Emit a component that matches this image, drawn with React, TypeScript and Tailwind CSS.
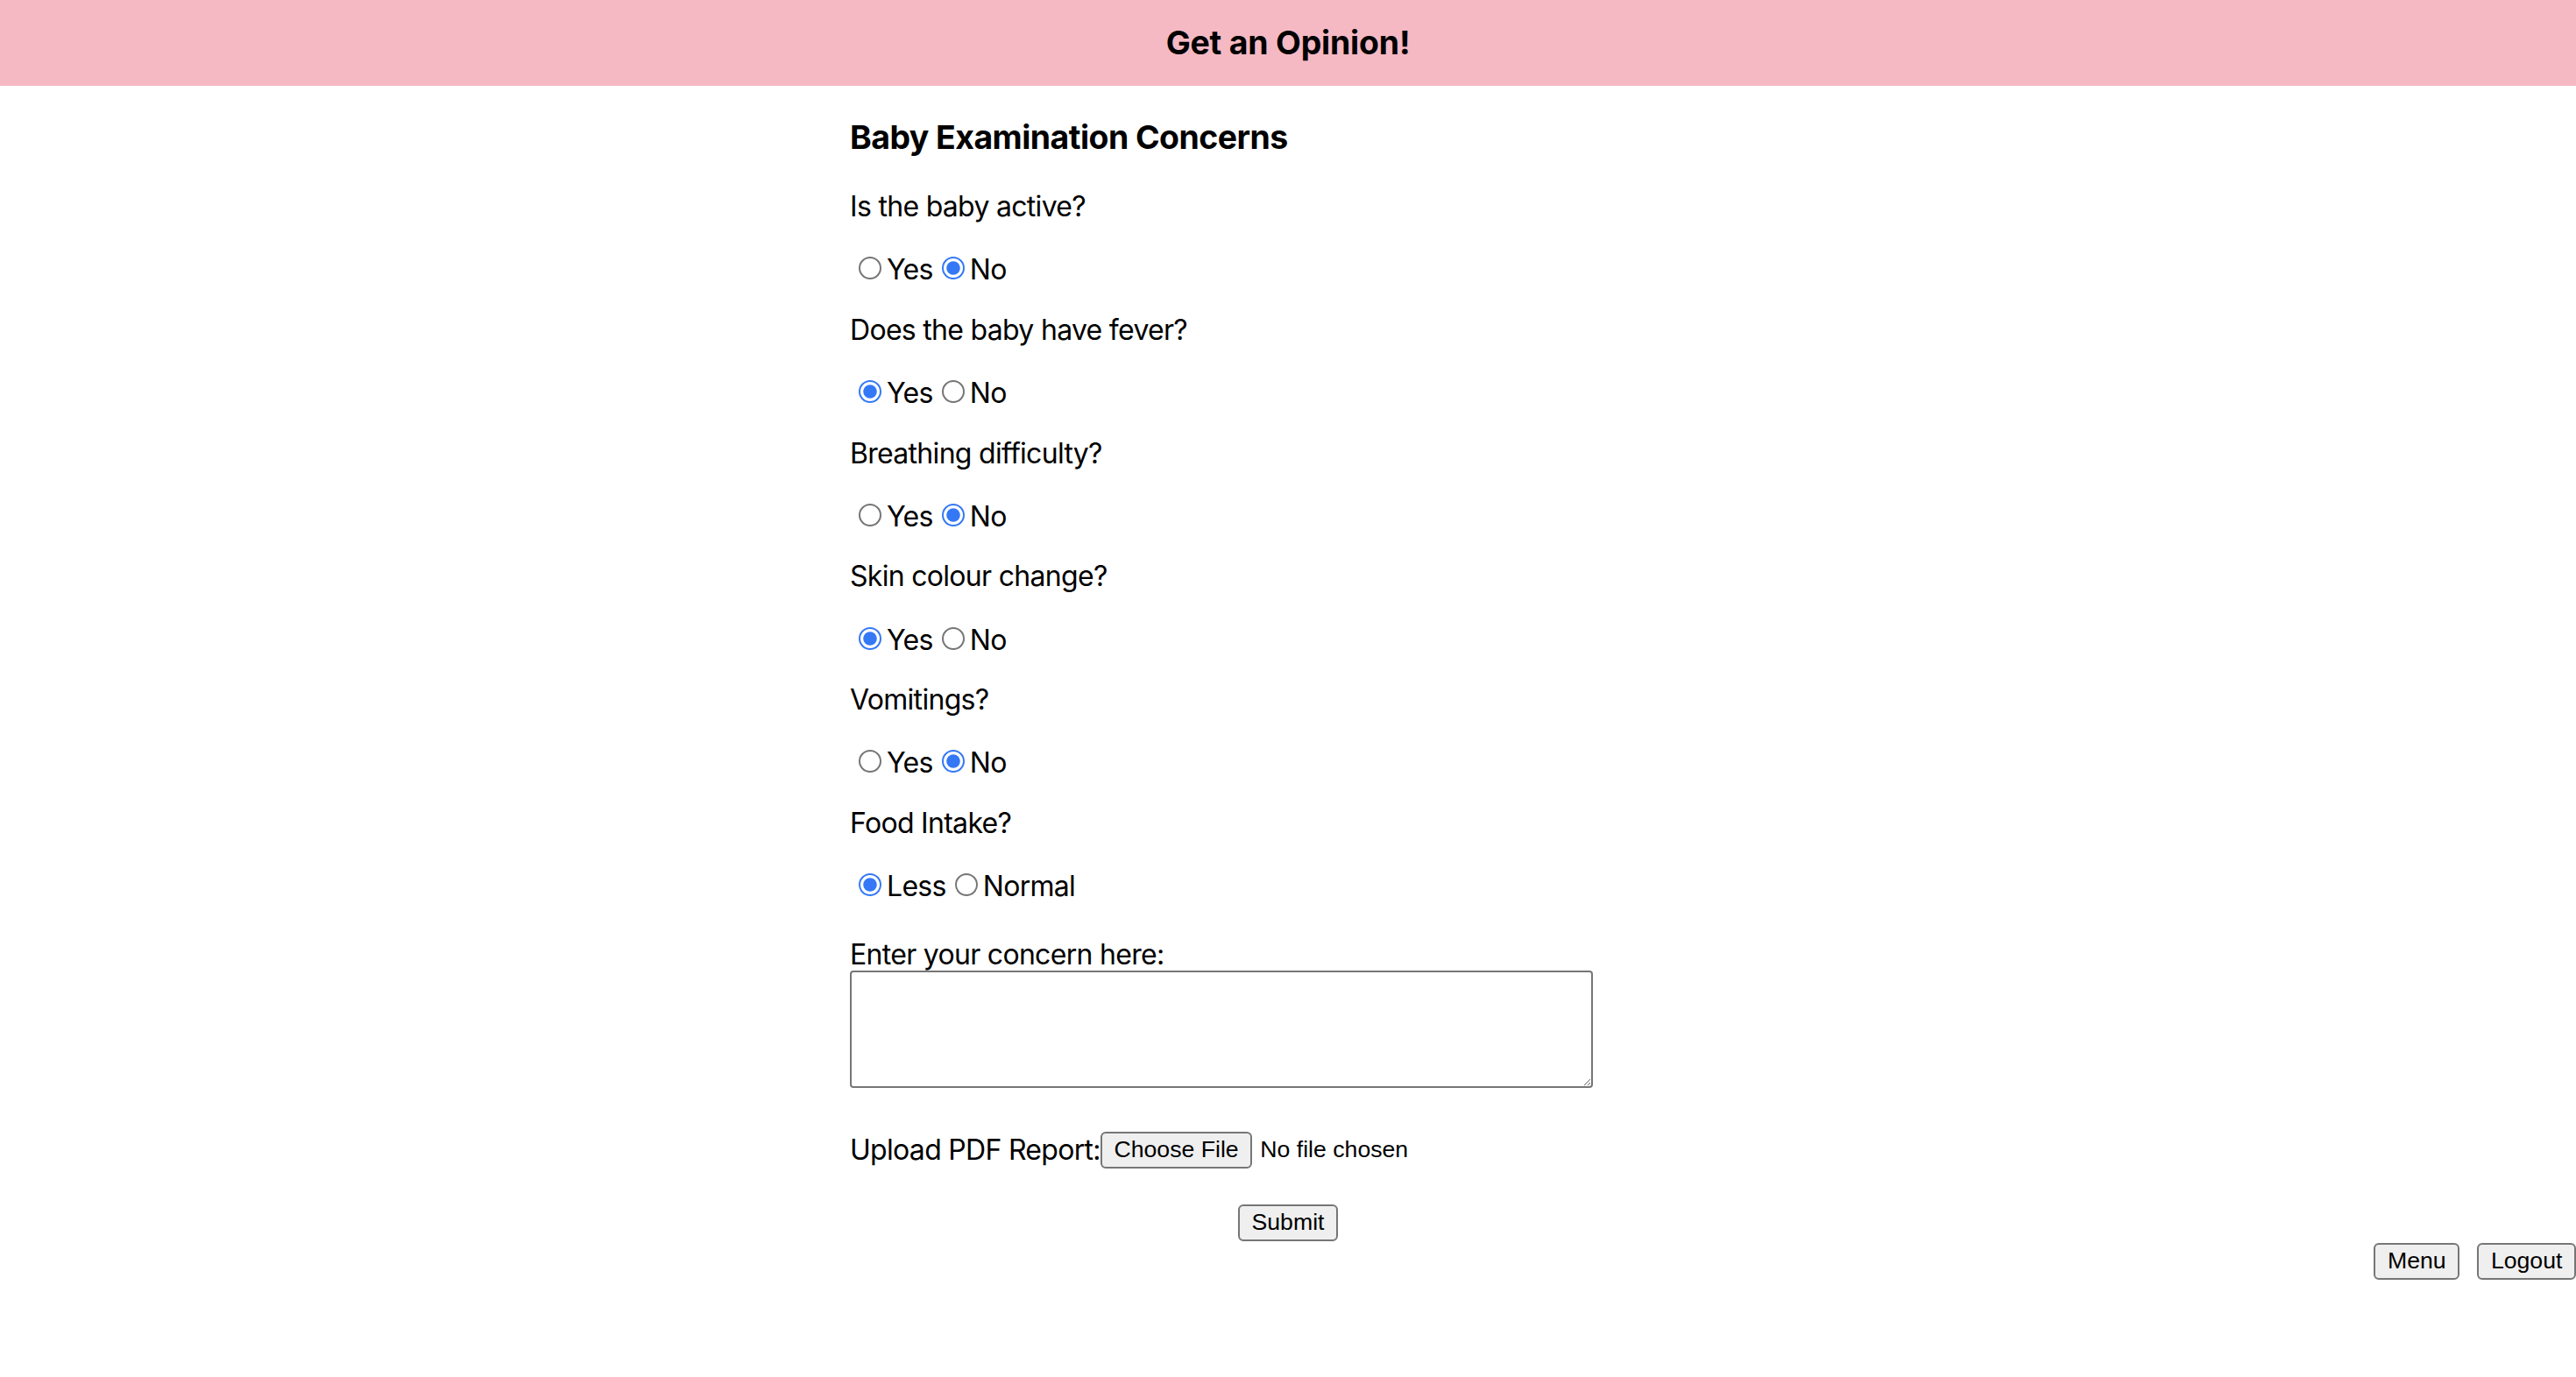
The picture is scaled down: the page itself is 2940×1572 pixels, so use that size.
import React from 'react';

type Question = {
  label: string;
  name: string;
  options: string[];
  checked: number;
};

const questions: Question[] = [
  { label: 'Is the baby active?', name: 'active', options: ['Yes', 'No'], checked: 1 },
  { label: 'Does the baby have fever?', name: 'fever', options: ['Yes', 'No'], checked: 0 },
  { label: 'Breathing difficulty?', name: 'breathing', options: ['Yes', 'No'], checked: 1 },
  { label: 'Skin colour change?', name: 'skin', options: ['Yes', 'No'], checked: 0 },
  { label: 'Vomitings?', name: 'vomiting', options: ['Yes', 'No'], checked: 1 },
  { label: 'Food Intake?', name: 'food', options: ['Less', 'Normal'], checked: 0 },
];

// native-looking control button (preflight strips the defaults)
const btn =
  "inline-flex items-center justify-center h-[21px] px-[6.8px] bg-[#efefef] border border-[#767676] rounded-[3px] text-[13.33px] leading-none text-black font-['Liberation_Sans',Arial,sans-serif]";

export default function App() {
  return (
    <div className="[zoom:2] bg-white text-black font-['Inter','Noto_Sans',sans-serif]">
      <header className="h-[48.75px] bg-[#f5b9c4] flex items-center justify-center">
        <h1 className="text-[18.72px] font-bold leading-[22px] tracking-[-0.1px]">Get an Opinion!</h1>
      </header>

      <form className="w-[500px] mx-auto tracking-[-0.35px]" onSubmit={(e) => e.preventDefault()}>
        <h3 className="my-[18.72px] h-[22.3px] text-[18.72px] font-bold leading-[22.3px] tracking-[-0.27px]">
          Baby Examination Concerns
        </h3>

        {questions.map((q) => (
          <div key={q.name}>
            <p className="mb-[16px] h-[19.2px] text-[16px] leading-[19.2px]">{q.label}</p>
            <p className="mb-[16px] h-[19.2px] text-[16px] leading-[19.2px]">
              {q.options.map((opt, i) => (
                <React.Fragment key={opt}>
                  <input
                    type="radio"
                    name={q.name}
                    value={opt}
                    defaultChecked={i === q.checked}
                    className="m-[3px_3px_0_5px] accent-[#3478f6]"
                  />
                  {opt}
                </React.Fragment>
              ))}
            </p>
          </div>
        ))}

        {/* margin collapses with the last row's mb-[16px] */}
        <label htmlFor="concern" className="block mt-[20.7px] h-[18.3px] text-[16px] leading-[19.2px]">
          Enter your concern here:
        </label>
        <textarea
          id="concern"
          className="block w-[424px] h-[67px] p-[2px] border border-[#767676] rounded-[2px] bg-white text-[13.33px] font-['Liberation_Mono',monospace]"
        />

        <div className="mt-[25px] flex items-center h-[21px] text-[16px]">
          <span>Upload PDF Report:</span>
          <label className="flex items-center cursor-pointer tracking-normal">
            <input type="file" accept="application/pdf" className="sr-only" />
            <span className={btn}>Choose File</span>
            <span className="ml-[4.5px] text-[13.33px] font-['Liberation_Sans',Arial,sans-serif]">No file chosen</span>
          </label>
        </div>

        <div className="mt-[20.5px] flex justify-center tracking-normal">
          <button type="submit" className={btn}>Submit</button>
        </div>
      </form>

      <div className="mt-[1px] flex justify-end gap-[10px]">
        <button type="button" className={btn}>Menu</button>
        <button type="button" className={btn}>Logout</button>
      </div>
    </div>
  );
}
